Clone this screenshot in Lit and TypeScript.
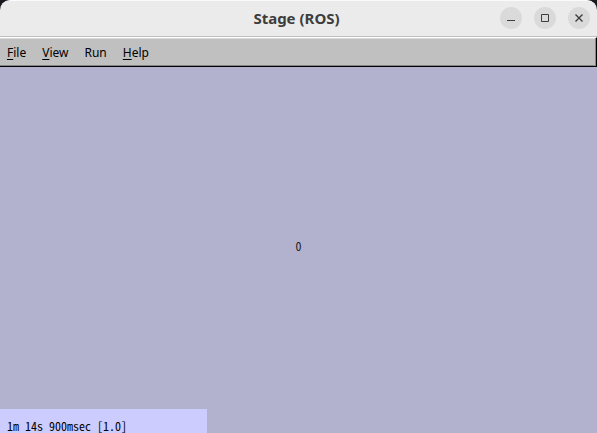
import { LitElement, html, css, svg } from "lit";
import { customElement, state } from "lit/decorators.js";

@customElement("app-root")
export class AppRoot extends LitElement {
  @state() private menus = [
    { key: "F", rest: "ile" },
    { key: "V", rest: "iew" },
    { key: "", rest: "Run" },
    { key: "H", rest: "elp" },
  ];

  @state() private controls = [
    { label: "Minimize", icon: svg`<path d="M7 13.5H15" />` },
    { label: "Maximize", icon: svg`<path d="M7.5 7.5H14.5V14.5H7.5Z" />` },
    { label: "Close", icon: svg`<path d="M7.5 7.5L14.5 14.5M14.5 7.5L7.5 14.5" stroke-width="1.4" />` },
  ];

  static styles = css`
    :host {
      display: flex;
      flex-direction: column;
      min-height: 100vh;
      background: #1c1820;
      color: #000;
      font-family: "Noto Sans", "Open Sans", sans-serif;
    }
    .titlebar {
      display: grid;
      grid-template-columns: 1fr auto 1fr;
      align-items: center;
      box-sizing: border-box;
      height: 37px;
      padding: 0 7px 1px 3px;
      background: #ebebeb;
      border-top: 1px solid #fafafa;
      border-bottom: 1px solid #bfbfbf;
      border-radius: 10px 10px 0 0;
    }
    .title {
      grid-column: 2;
      margin: 0;
      font-size: 15px;
      line-height: 20px;
      font-weight: 700;
      color: #3d3d3d;
    }
    .controls {
      display: flex;
      justify-content: flex-end;
      gap: 12px;
    }
    .control {
      width: 22px;
      height: 22px;
      padding: 0;
      border: 0;
      border-radius: 50%;
      background: #dadada;
    }
    .icon {
      display: block;
      fill: none;
      stroke: #3d3d3d;
    }
    .menubar {
      display: flex;
      align-items: center;
      gap: 16px;
      box-sizing: border-box;
      height: 30px;
      padding: 2px 7px 0;
      background: #c0c0c0;
      border: 1px solid #000;
      border-left: 0;
      border-top-color: #fff;
      box-shadow: inset -1px -1px #858585, inset 0 1px #dadada;
    }
    .menu {
      padding: 0;
      border: 0;
      background: none;
      color: inherit;
      font: inherit;
      font-size: 12px;
      line-height: 16px;
    }
    .key {
      text-decoration: underline;
      text-underline-offset: 2px;
    }
    .world {
      position: relative;
      display: flex;
      flex: 1;
      flex-direction: column;
      justify-content: flex-end;
      align-items: flex-start;
      background: #b2b2ce;
      font-family: "Noto Sans Mono CJK JP", "Liberation Mono", monospace;
      font-size: 12px;
      line-height: 12px;
    }
    .marker {
      position: absolute;
      left: 50%;
      top: 49%;
      transform: translate(-50%, -50%);
      color: #222;
    }
    .status {
      box-sizing: border-box;
      width: 207px;
      height: 24px;
      padding: 11px 7px 0;
      background: #ccccff;
      white-space: nowrap;
    }
  `;

  render() {
    return html`
      <header class="titlebar">
        <h1 class="title">Stage (ROS)</h1>
        <div class="controls">
          ${this.controls.map(
            (c) => html`<button class="control" aria-label=${c.label}>
              <svg class="icon" width="22" height="22" viewBox="0 0 22 22">${c.icon}</svg>
            </button>`
          )}
        </div>
      </header>
      <nav class="menubar">
        ${this.menus.map(
          (m) => html`<button class="menu"><span class="key">${m.key}</span>${m.rest}</button>`
        )}
      </nav>
      <main class="world">
        <span class="marker">0</span>
        <div class="status">1m 14s 900msec [1.0]</div>
      </main>
    `;
  }
}
